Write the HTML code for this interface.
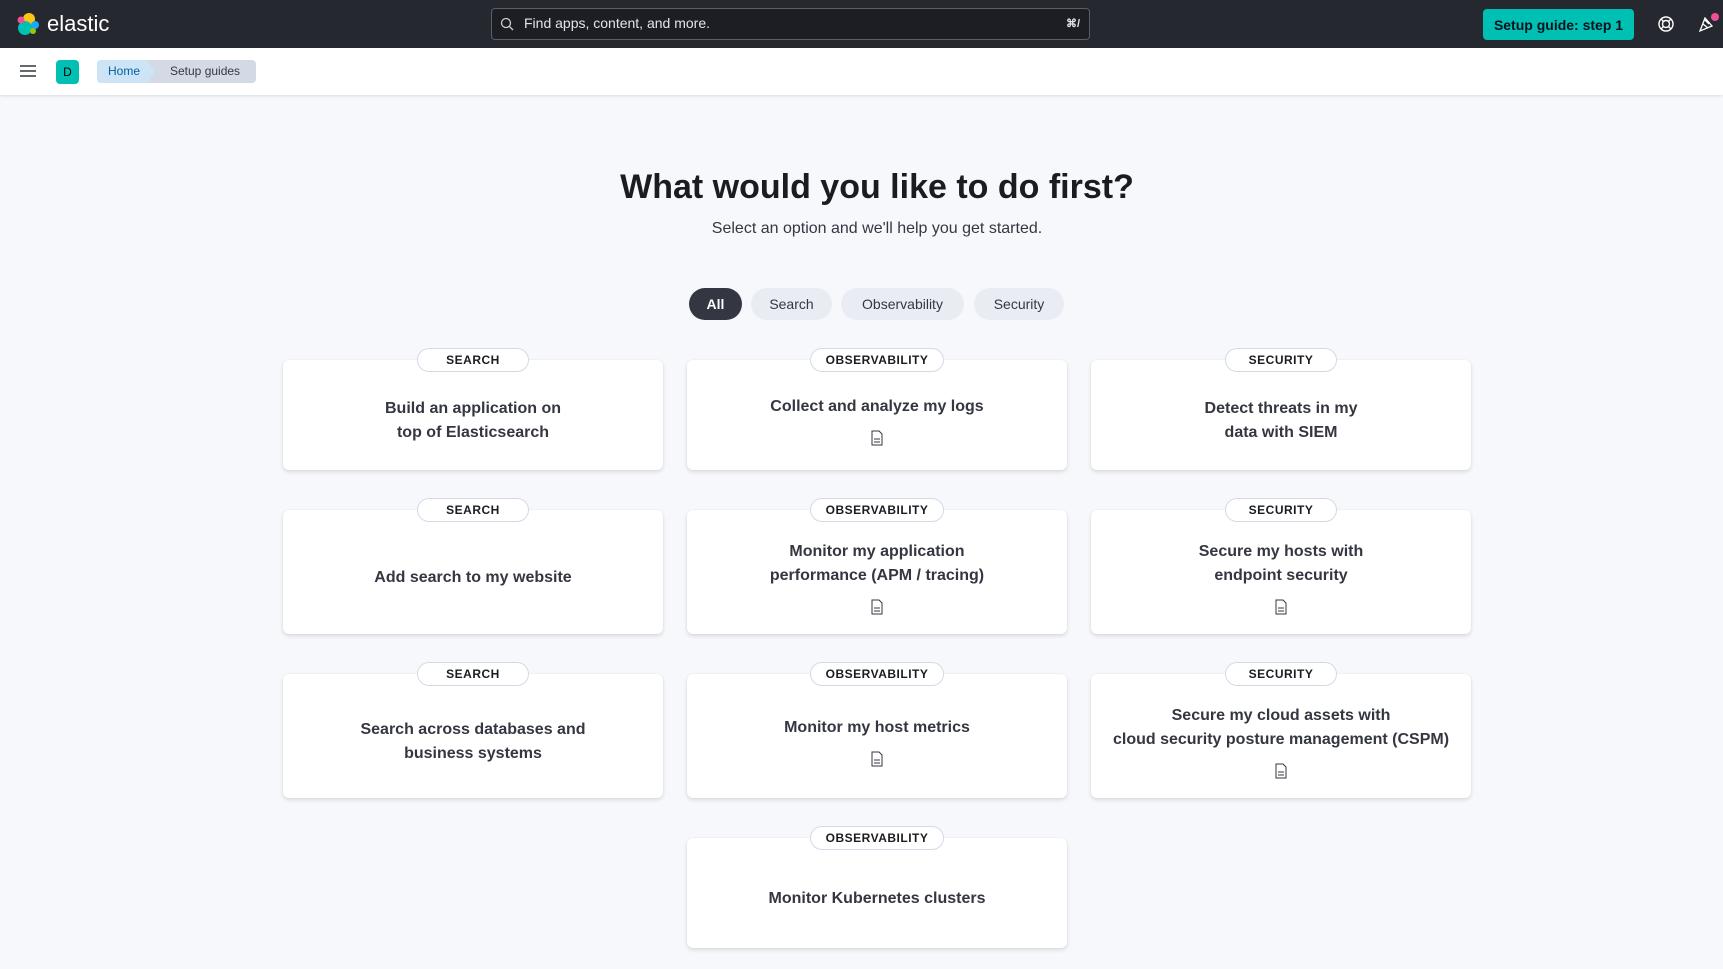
<!DOCTYPE html>
<html><head><meta charset="utf-8"><style>
*{box-sizing:border-box;margin:0;padding:0}
body{width:1723px;height:969px;overflow:hidden;background:#f7f8fc;font-family:"Liberation Sans",sans-serif;color:#1a1c21;position:relative}
.top{position:absolute;left:0;top:0;width:1723px;height:48px;background:#25282f}
.bar{position:absolute;left:0;top:48px;width:1723px;height:47px;background:#fff;box-shadow:0 1px 3px rgba(0,0,0,.12)}
.abs{position:absolute}
.card{position:absolute;width:380px;background:#fff;border-radius:6px;box-shadow:0 2px 4px rgba(0,0,0,.12),0 0 1px rgba(0,0,0,.1);display:flex;flex-direction:column;align-items:center;justify-content:center;text-align:center;font-weight:bold;font-size:16px;line-height:24px;color:#343741;padding-top:11px}
.badge{position:absolute;height:24px;background:#fff;border:1px solid #d3dae6;border-radius:12px;font-size:12px;font-weight:bold;letter-spacing:.5px;display:flex;align-items:center;justify-content:center;color:#1a1c21;transform:translateX(-50%)}
.doc{margin-top:11px;width:12px;height:16px}
.tab{position:absolute;top:288px;height:32px;border-radius:16px;background:#e9edf3;font-size:14px;display:flex;align-items:center;justify-content:center;color:#343741}
</style></head><body>
<div class="top">
 <svg class="abs" style="left:15px;top:11px" width="26" height="26" viewBox="0 0 26 26"><circle cx="14" cy="8" r="6" fill="#fec514"/><circle cx="10" cy="17" r="7" fill="#00bfb3"/><circle cx="6" cy="9" r="3.5" fill="#f04e98"/><circle cx="20" cy="14" r="4" fill="#1ba9f5"/><circle cx="18" cy="20" r="3" fill="#93c90e"/></svg>
 <div class="abs" style="left:47px;top:11px;color:#fff;font-size:22px;line-height:26px">elastic</div>
 <div class="abs" style="left:491px;top:8px;width:599px;height:32px;border:1px solid #5a5e66;border-radius:4px;background:#1d1e24"></div>
 <svg class="abs" style="left:500px;top:17px" width="14" height="14" viewBox="0 0 14 14"><circle cx="6" cy="6" r="4.5" fill="none" stroke="#ccc" stroke-width="1.3"/><path d="M9.5 9.5L13 13" stroke="#ccc" stroke-width="1.3"/></svg>
 <div class="abs" style="left:524px;top:15px;color:#dfe5ef;font-size:14px">Find apps, content, and more.</div>
 <div class="abs" style="left:1066px;top:17px;color:#dfe5ef;font-size:11px;font-weight:bold">⌘/</div>
 <div class="abs" style="left:1483px;top:9px;width:151px;height:31px;background:#00bfb3;border-radius:4px;color:#07101f;font-size:14px;font-weight:bold;display:flex;align-items:center;justify-content:center">Setup guide: step 1</div>
 <svg class="abs" style="left:1657px;top:15px" width="18" height="18" viewBox="0 0 18 18" fill="none" stroke="#fff" stroke-width="1.4"><circle cx="9" cy="9" r="7"/><circle cx="9" cy="9" r="3.5"/><path d="M4 4l2.5 2.5M14 4l-2.5 2.5M4 14l2.5-2.5M14 14l-2.5-2.5"/></svg>
 <svg class="abs" style="left:1697px;top:12px" width="24" height="22" viewBox="0 0 24 22" fill="none" stroke="#fff" stroke-width="1.3"><path d="M3 19l5-13 7 8z M6 12l5 4 M8 8l4 4"/><circle cx="18" cy="5" r="4" fill="#f04e98" stroke="none"/></svg>
</div>
<div class="bar">
 <svg class="abs" style="left:20px;top:16px" width="16" height="14" viewBox="0 0 16 14"><path d="M0 2h16M0 7h16M0 12h16" stroke="#343741" stroke-width="1.6"/></svg>
 <div class="abs" style="left:56px;top:12px;width:23px;height:24px;background:#00bfb3;border-radius:4px;font-size:12px;display:flex;align-items:center;justify-content:center;color:#000">D</div>
 <div class="abs" style="left:97px;top:12px;width:159px;height:23px;background:#d3dae6;border-radius:4px"></div>
 <div class="abs" style="left:97px;top:12px;width:58px;height:23px;background:#cce4f5;border-radius:4px 0 0 4px;clip-path:polygon(0 0,50px 0,58px 50%,50px 100%,0 100%)"></div>
 <div class="abs" style="left:108px;top:16px;font-size:12px;color:#0061a6">Home</div>
 <div class="abs" style="left:170px;top:16px;font-size:12px;color:#343741">Setup guides</div>
</div>
<div class="abs" style="left:0;width:1754px;top:168px;text-align:center;font-size:34px;font-weight:bold;color:#1a1c21">What would you like to do first?</div>
<div class="abs" style="left:0;width:1754px;top:220px;text-align:center;font-size:16px;color:#343741">Select an option and we'll help you get started.</div>
<div class="tab" style="left:689px;width:53px;background:#343741;color:#fff;font-weight:bold">All</div>
<div class="tab" style="left:751px;width:81px">Search</div>
<div class="tab" style="left:841px;width:123px">Observability</div>
<div class="tab" style="left:974px;width:90px">Security</div>

<div class="card" style="left:283px;top:360px;height:110px">Build an application on<br>top of Elasticsearch</div>
<div class="card" style="left:687px;top:360px;height:110px">Collect and analyze my logs<svg class="doc" viewBox="0 0 12 16"><path d="M1 1h7l3 3v11H1z M3 9h6M3 12h6" fill="none" stroke="#343741" stroke-width="1"/></svg></div>
<div class="card" style="left:1091px;top:360px;height:110px">Detect threats in my<br>data with SIEM</div>
<div class="card" style="left:283px;top:510px;height:124px">Add search to my website</div>
<div class="card" style="left:687px;top:510px;height:124px">Monitor my application<br>performance (APM / tracing)<svg class="doc" viewBox="0 0 12 16"><path d="M1 1h7l3 3v11H1z M3 9h6M3 12h6" fill="none" stroke="#343741" stroke-width="1"/></svg></div>
<div class="card" style="left:1091px;top:510px;height:124px">Secure my hosts with<br>endpoint security<svg class="doc" viewBox="0 0 12 16"><path d="M1 1h7l3 3v11H1z M3 9h6M3 12h6" fill="none" stroke="#343741" stroke-width="1"/></svg></div>
<div class="card" style="left:283px;top:674px;height:124px">Search across databases and<br>business systems</div>
<div class="card" style="left:687px;top:674px;height:124px">Monitor my host metrics<svg class="doc" viewBox="0 0 12 16"><path d="M1 1h7l3 3v11H1z M3 9h6M3 12h6" fill="none" stroke="#343741" stroke-width="1"/></svg></div>
<div class="card" style="left:1091px;top:674px;height:124px">Secure my cloud assets with<br>cloud security posture management (CSPM)<svg class="doc" viewBox="0 0 12 16"><path d="M1 1h7l3 3v11H1z M3 9h6M3 12h6" fill="none" stroke="#343741" stroke-width="1"/></svg></div>
<div class="card" style="left:687px;top:838px;height:110px">Monitor Kubernetes clusters</div>

<div class="badge" style="left:473px;top:348px;width:112px">SEARCH</div>
<div class="badge" style="left:877px;top:348px;width:134px">OBSERVABILITY</div>
<div class="badge" style="left:1281px;top:348px;width:112px">SECURITY</div>
<div class="badge" style="left:473px;top:498px;width:112px">SEARCH</div>
<div class="badge" style="left:877px;top:498px;width:134px">OBSERVABILITY</div>
<div class="badge" style="left:1281px;top:498px;width:112px">SECURITY</div>
<div class="badge" style="left:473px;top:662px;width:112px">SEARCH</div>
<div class="badge" style="left:877px;top:662px;width:134px">OBSERVABILITY</div>
<div class="badge" style="left:1281px;top:662px;width:112px">SECURITY</div>
<div class="badge" style="left:877px;top:826px;width:134px">OBSERVABILITY</div>
</body></html>
